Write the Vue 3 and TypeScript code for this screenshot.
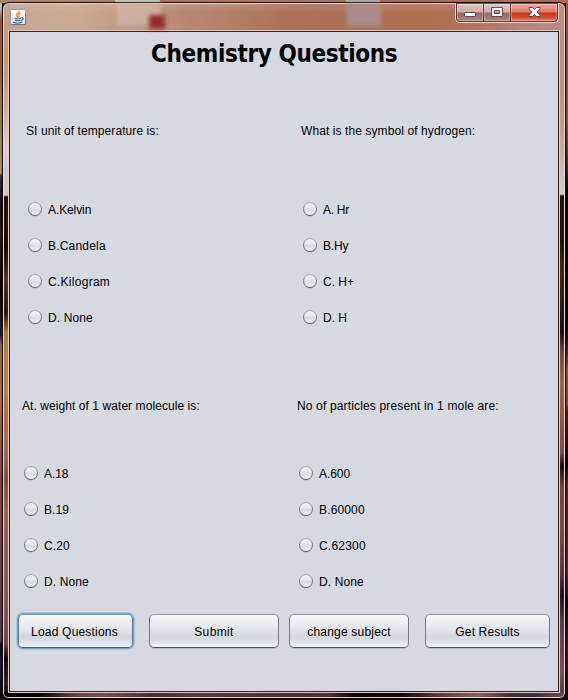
<script setup lang="ts">
interface Option { label: string; spacing: number }
interface Question { area: string; text: string; spacing: number; options: Option[] }

const questions: Question[] = [
  {
    area: 'q1', text: 'SI unit of temperature is:', spacing: 0.08,
    options: [
      { label: 'A.Kelvin', spacing: -0.1 }, { label: 'B.Candela', spacing: 0.2 },
      { label: 'C.Kilogram', spacing: 0.28 }, { label: 'D. None', spacing: 0.1 },
    ],
  },
  {
    area: 'q2', text: 'What is the symbol of hydrogen:', spacing: 0.09,
    options: [
      { label: 'A. Hr', spacing: -0.3 }, { label: 'B.Hy', spacing: -0.2 },
      { label: 'C. H+', spacing: 0 }, { label: 'D. H', spacing: 0 },
    ],
  },
  {
    area: 'q3', text: 'At. weight of 1 water molecule is:', spacing: 0.07,
    options: [
      { label: 'A.18', spacing: -0.1 }, { label: 'B.19', spacing: 0.1 },
      { label: 'C.20', spacing: 0.1 }, { label: 'D. None', spacing: 0.1 },
    ],
  },
  {
    area: 'q4', text: 'No of particles present in 1 mole are:', spacing: 0.15,
    options: [
      { label: 'A.600', spacing: -0.05 }, { label: 'B.60000', spacing: 0.15 },
      { label: 'C.62300', spacing: 0.2 }, { label: 'D. None', spacing: 0.1 },
    ],
  },
]
const actions = [
  { label: 'Load Questions', name: 'load', spacing: 0.2 },
  { label: 'Submit', name: 'submit', spacing: 0.35 },
  { label: 'change subject', name: 'change', spacing: 0.2 },
  { label: 'Get Results', name: 'results', spacing: 0.15 },
]
</script>

<template>
  <div class="desktop">
    <div class="window">
      <header class="titlebar">
        <div class="ghost ghost-left"></div>
        <div class="ghost ghost-red"></div>
        <div class="ghost ghost-right"></div>
        <svg class="java" width="16" height="16" viewBox="0 0 16 16">
          <defs>
            <linearGradient id="tile" x1="0" y1="0" x2="0" y2="1">
              <stop offset="0" stop-color="#fff" /><stop offset="1" stop-color="#dce5ea" />
            </linearGradient>
          </defs>
          <rect x=".5" y=".5" width="15" height="15" rx="1" fill="url(#tile)" stroke="#8fa5b4" />
          <path d="M.5 15.5h15V5" fill="none" stroke="#557a94" />
          <path d="M9.600 1.600c.6 2-3.300 2.600-3 4.400.1 1 1 1.500 1.300 2.300M10.800 4.300c-2.200.7-2.700 1.500-1.900 2.400.5.6.2 1.200-.3 1.600" fill="none" stroke="#ee8420" stroke-width="1.200" />
          <path d="M4.500 9.300c1.500.6 4.500.6 6.500 0M5 11.200c1.600.5 4 .5 5.500 0M3 13.300c2.500.9 7 .9 9.500-.2M11.300 8.800c2.700-.5 2.500 2-.3 2.700" fill="none" stroke="#3f7193" stroke-width="1.100" />
        </svg>
        <div class="controls">
          <div class="control minimize">
            <svg width="28" height="18" viewBox="0 0 28 18"><rect x="8.500" y="9.500" width="11" height="4" rx=".5" fill="#fff" stroke="#535566" /></svg>
          </div>
          <div class="control maximize">
            <svg width="26" height="18" viewBox="0 0 26 18"><path fill-rule="evenodd" d="M7.500 4.500h11v9h-11zM10.500 7.500v3h5v-3z" fill="#f4f1f3" stroke="#535566" /></svg>
          </div>
          <div class="control close">
            <svg width="46" height="18" viewBox="0 0 46 18"><path d="M18 4.500h3.700l1.800 2 1.800-2H29v1.300L26.200 9l2.800 3.200v1.300h-3.700l-1.800-2-1.800 2H18v-1.300L20.800 9 18 5.800z" fill="#f8f6f6" stroke="#5b4a59" /></svg>
          </div>
        </div>
      </header>

      <main class="panel">
        <h1>Chemistry Questions</h1>
        <div class="questions">
          <section v-for="q in questions" :key="q.area" class="question" :class="q.area">
            <p :style="{ letterSpacing: q.spacing + 'px' }">{{ q.text }}</p>
            <ul>
              <li v-for="o in q.options" :key="o.label">
                <svg width="16" height="17" viewBox="0 0 16 17">
                  <defs>
                    <linearGradient :id="q.area + '-rim'" x1="0" y1="0" x2="0" y2="1">
                      <stop offset="0" stop-color="#a1a4aa" /><stop offset="1" stop-color="#5c6067" />
                    </linearGradient>
                    <linearGradient :id="q.area + '-face'" x1="0" y1="0" x2="0" y2="1">
                      <stop offset="0" stop-color="#f9fafb" /><stop offset=".5" stop-color="#dfe1e6" />
                      <stop offset=".6" stop-color="#d8dbe1" /><stop offset="1" stop-color="#f7f8fb" />
                    </linearGradient>
                  </defs>
                  <circle cx="8" cy="8.800" r="7" fill="#bfc3cb" />
                  <circle cx="8" cy="8" r="6.500" :fill="`url(#${q.area}-face)`" :stroke="`url(#${q.area}-rim)`" />
                </svg>
                <span :style="{ letterSpacing: o.spacing + 'px' }">{{ o.label }}</span>
              </li>
            </ul>
          </section>
        </div>
        <footer>
          <button v-for="a in actions" :key="a.name" type="button" :class="a.name">
            <span :style="{ letterSpacing: a.spacing + 'px' }">{{ a.label }}</span>
          </button>
        </footer>
      </main>
    </div>
  </div>
</template>

<style>
body { margin: 0; overflow: hidden; }
</style>

<style scoped>
* { box-sizing: border-box; }
.desktop {
  width: 568px; height: 700px; padding: 2px 2px 1px; overflow: hidden;
  background:
    linear-gradient(90deg, #a98467 0 115px, #c0bfbb 115px 160px, #ad745e 160px 346px, #aaa7a7 346px 380px, #b5654f 380px) 0 0 / 568px 3px no-repeat,
    linear-gradient(#9c5545 0, #8b5439 40px, #7a5830 120px, #42202a 165px, #08071c 190px, #06040c 325px, #2d171d 345px, #80562d 370px, #6e442d 405px, #3c2522 410px, #0a0508 465px, #4a2522 485px, #4b282b 570px, #110a12 605px, #2b1b2c 650px, #0c0910 700px) 566px 0 / 2px 700px no-repeat,
    linear-gradient(#b9c0c0 0 8px, #8f5a34 18px, #8b6332 70px, #a28d5d 173px, #3d2341 176px, #140b17 205px, #2b1507 230px, #09060a 290px, #251a2c 335px, #8b6a2b 345px, #9c713d 400px, #75473d 470px, #633c47 560px, #55333f 640px, #09070f 645px, #1c1831 670px, #050308 700px) 0 0 / 2px 700px no-repeat,
    #080609;
}
.window {
  width: 564px; height: 697px; padding: 0 5px 5px; position: relative;
  border: 1px solid #0c0807; border-radius: 7px 7px 6px 6px;
  box-shadow: inset 0 0 0 1px #e7d7cf;
  background:
    linear-gradient(90deg, #040204 0 35px, #6a4349 75px, #7d4c52 100px, #462e35 150px, #593640 190px, #4d3037 290px, #563039 325px, #0b080b 350px, #110b0e 400px, #5b3839 435px, #8d6255 475px, #4a2d38 505px, #3c2d48 530px, #7c4a4b 564px) 0 689px / 564px 8px no-repeat,
    linear-gradient(#bd8d7f 0, #c0907f 90px, #c59b83 125px, #c5b7b4 160px, #d0ccce 191px, #20120d 193px, #22140d 240px, #432511 265px, #1c0f13 330px, #7d463f 350px, #a1653f 380px, #9a573e 415px, #7c4944 450px, #180c10 463px, #823f3e 485px, #824844 525px, #54394b 570px, #1f1521 593px, #5b3a4d 620px, #7c4b55 670px, #4e3143 697px) 555px 0 / 7px 697px no-repeat,
    linear-gradient(#c5a491 0, #c89d7d 25px, #c79760 55px, #c7a587 90px, #dfceca 145px, #cdc9cf 165px 192px, #261106 194px, #281406 220px, #120907 245px, #54312f 275px, #2e180d 310px, #ac7d3e 330px, #b78448 385px, #b86a40 415px, #a16c5a 450px, #8b4a44 473px, #97605a 510px, #8b555c 600px, #744452 640px, #100a0f 655px, #2b2232 680px, #030205 697px) 0 0 / 7px 697px no-repeat,
    linear-gradient(180deg, #ffffff22, transparent 10px),
    radial-gradient(ellipse at 415px 24px, #af704f 0, transparent 100px),
    linear-gradient(90deg, #c5a491 0, #cba991 70px, #b98871 180px, #ad7159 280px, #ab6c55 390px, #b17867 470px, #bb8d80 564px);
}
.titlebar { height: 28px; display: flex; justify-content: space-between; align-items: flex-start; position: relative; }
.java { margin: 6px 0 0 2px; position: relative; }
.ghost { position: absolute; filter: blur(2px); }
.ghost-left { left: 109px; top: 1px; width: 44px; height: 22px; background: #d2b7ad; opacity: .75; }
.ghost-red { left: 141px; top: 12px; width: 16px; height: 14px; background: #932f31; }
.ghost-right { left: 339px; top: 1px; width: 34px; height: 22px; background: #aa8d8a; }
.controls {
  display: flex; width: 104px; height: 20px; position: relative; left: -1px;
  border: 1px solid #f0d9d1; border-top: 0; border-radius: 0 0 5px 5px; overflow: hidden;
}
.control {
  height: 19px; border: 1px solid #563a39; border-top-color: #75514c;
  background: linear-gradient(#e0c5bf 0, #cfaca4 8px, #986a60 9px, #b38275 18px);
  box-shadow: inset 0 0 0 1px #ffffff55;
}
.control svg { display: block; margin-top: -1px; }
.minimize { width: 28px; border-radius: 0 0 0 4px; }
.minimize svg { margin-left: -1px; }
.maximize { width: 27px; border-left: 0; }
.close { width: 47px; border-left: 0; border-radius: 0 0 4px 0; background: linear-gradient(#eba99b 0, #df7b65 8px, #c63518 9px, #d4472a 13px, #e98b67 18px); }
.panel {
  width: 550px; height: 661px; margin-left: 1px;
  display: flex; flex-direction: column; background: #d6d9e0;
  border: 1px solid #35241f; outline: 1px solid #dfc9bf;
  font: 12px/16px "Liberation Sans", Arial, sans-serif; color: #000;
}
h1 {
  margin: 8px 0 0 141px; width: 260px; height: 30px; white-space: nowrap;
  font: bold 24px/28px "DejaVu Sans Condensed", "DejaVu Sans", sans-serif; font-stretch: condensed;
  letter-spacing: -.36px;
}
.questions { height: 540px; display: grid; grid-template-columns: 275px 1fr; grid-template-rows: 275px 265px; }
.question { padding: 53px 0 0 16px; white-space: nowrap; }
.q3, .q4 { padding-left: 12px; }
p { margin: 0; height: 16px; }
ul { margin: 0 0 0 1px; padding: 0; list-style: none; display: flex; flex-direction: column; gap: 20px; }
.q1 ul, .q2 ul { margin-top: 62px; }
.q3 ul, .q4 ul { margin-top: 51px; }
li { height: 16px; display: flex; align-items: center; gap: 5px; }
li svg { flex: none; }
li span { padding-top: 2px; }
footer { display: flex; margin-left: 8px; padding-top: 4px; }
button {
  height: 34px; padding: 1px 0 0; border: 1px solid; border-color: #94979d #74777d #4e5156; border-radius: 5px;
  background: linear-gradient(#f7f7fa 0, #e4e6ea 14px, #d6d9df 20px, #d6d9df 24px, #f5f7fb 33px);
  box-shadow: 0 1px #bfc3cb; font: inherit; color: inherit; white-space: nowrap;
}
.load { width: 115px; padding-right: 2px; box-shadow: 0 0 0 1px #73a4d1, 0 0 0 2px #73a4d166; border-color: #6f9ac2 #5b7f9f #4e5f70; }
.submit { width: 130px; margin-left: 16px; }
.change { width: 120px; margin-left: 10px; }
.results { width: 125px; margin-left: 16px; }
</style>
